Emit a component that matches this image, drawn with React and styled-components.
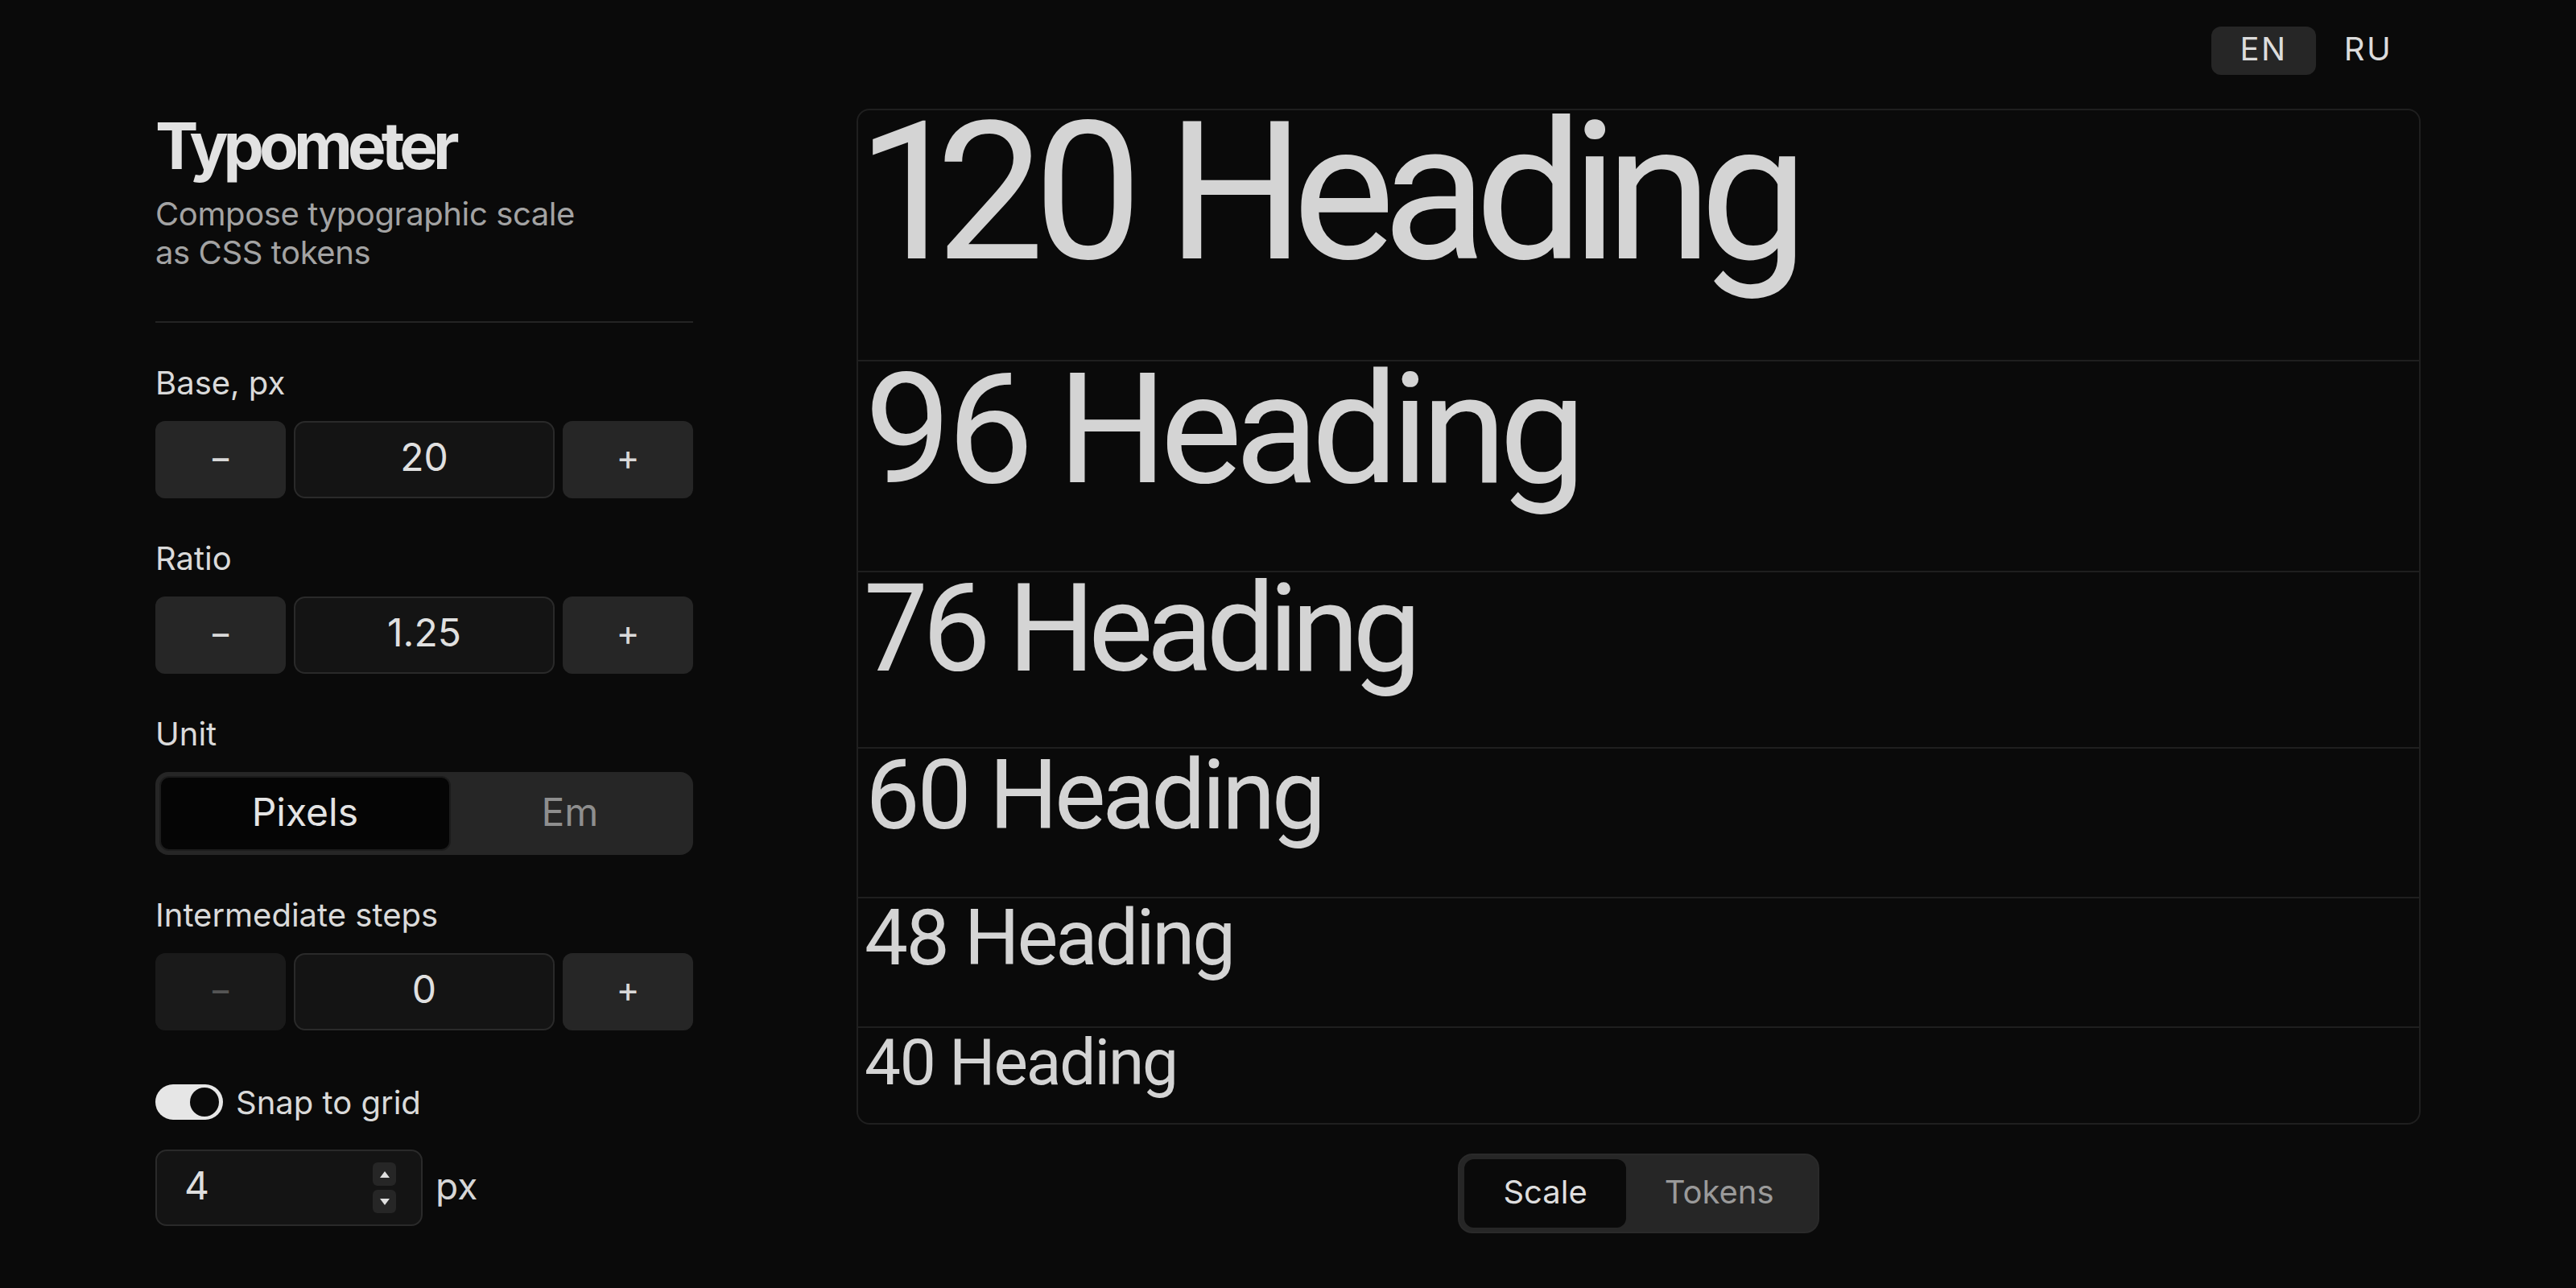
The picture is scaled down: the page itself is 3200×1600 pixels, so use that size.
import React from "react"
import styled, { createGlobalStyle } from "styled-components"

const GlobalStyle = createGlobalStyle`
  * {
    box-sizing: border-box;
  }
  html,
  body {
    margin: 0;
    background: #0a0a0a;
  }
  body {
    font-family: Inter, "Noto Sans", sans-serif;
    color: #d9d9d9;
  }
  button {
    font-family: inherit;
    cursor: pointer;
  }
`

const Page = styled.div`
  width: 2814px;
  min-height: 1600px;
  margin: 0 auto;
  padding-top: 33px;
`

const TopBar = styled.div`
  display: flex;
  justify-content: flex-end;
  height: 60px;
  margin-bottom: 42px;
`

const LangButton = styled.button`
  width: 130px;
  height: 60px;
  padding: 0 0 6px;
  border: none;
  border-radius: 12px;
  background: ${(p) => (p.$active ? "#262626" : "transparent")};
  color: #dcdcdc;
  font-size: 40px;
  letter-spacing: 0.06em;
`

const Main = styled.div`
  display: grid;
  grid-template-columns: 668px 1fr;
  column-gap: 203px;
  align-items: start;
`

const Sidebar = styled.aside`
  display: flex;
  flex-direction: column;
`

const Title = styled.h1`
  margin: 0;
  font-size: 80px;
  line-height: 1.15;
  font-weight: 700;
  letter-spacing: -0.075em;
  color: #e2e2e2;
`

const Subtitle = styled.p`
  margin: 15px 0 0;
  font-size: 40px;
  line-height: 48px;
  letter-spacing: -0.01em;
  color: #a3a3a3;
`

const Divider = styled.hr`
  width: 100%;
  margin: 61px 0 51px;
  border: none;
  border-top: 2px solid #242424;
`

const Fields = styled.div`
  display: flex;
  flex-direction: column;
  gap: 51px;
`

const Field = styled.div`
  display: flex;
  flex-direction: column;
  gap: 23px;
`

const Label = styled.div`
  font-size: 40px;
  line-height: 48px;
  color: #dadada;
`

const Stepper = styled.div`
  display: grid;
  grid-template-columns: 1fr 2fr 1fr;
  gap: 10px;
  height: 96px;
`

const StepButton = styled.button`
  padding: 0 0 6px;
  border: none;
  border-radius: 12px;
  background: ${(p) => (p.disabled ? "#1a1a1a" : "#262626")};
  color: ${(p) => (p.disabled ? "#555555" : "#d9d9d9")};
  font-size: 44px;
  line-height: 1;
`

const StepValue = styled.div`
  display: flex;
  align-items: center;
  justify-content: center;
  padding-bottom: 8px;
  background: #141414;
  border: 2px solid #2a2a2a;
  border-radius: 14px;
  font-size: 48px;
  color: #e0e0e0;
`

const Segmented = styled.div`
  display: flex;
  height: 103px;
  padding: 5px;
  background: #262626;
  border-radius: 16px;
`

const Segment = styled.button`
  flex: 1 1 auto;
  padding: 0 0 4px;
  border: ${(p) => (p.$active ? "2px solid #1c1c1c" : "none")};
  border-radius: 12px;
  background: ${(p) => (p.$active ? "#050505" : "transparent")};
  color: ${(p) => (p.$active ? "#e4e4e4" : "#8e8e8e")};
  font-size: 48px;
`

const SnapField = styled.div`
  display: flex;
  flex-direction: column;
  gap: 34px;
  margin-top: 15px;
`

const SnapRow = styled.label`
  display: flex;
  align-items: center;
  gap: 16px;
  height: 48px;
  padding-bottom: 2px;
  font-size: 40px;
  color: #dadada;
`

const Toggle = styled.span`
  display: flex;
  align-items: center;
  justify-content: flex-end;
  width: 84px;
  height: 44px;
  padding: 4px 5px;
  border-radius: 22px;
  background: #e6e6e6;
`

const Knob = styled.span`
  width: 36px;
  height: 36px;
  border-radius: 50%;
  background: #0a0a0a;
`

const GridRow = styled.div`
  display: flex;
  align-items: center;
  gap: 16px;
`

const NumberBox = styled.div`
  display: flex;
  align-items: center;
  justify-content: space-between;
  width: 332px;
  height: 95px;
  padding: 0 31px 0 34px;
  background: #141414;
  border: 2px solid #2a2a2a;
  border-radius: 14px;
  font-size: 48px;
  color: #dedede;
`

const NumberText = styled.span`
  padding-bottom: 6px;
`

const Spinner = styled.div`
  display: flex;
  flex-direction: column;
  gap: 5px;
`

const SpinButton = styled.span`
  display: flex;
  align-items: center;
  justify-content: center;
  width: 29px;
  height: 29px;
  border-radius: 6px;
  background: #262626;

  &::after {
    content: "";
    border-left: 6px solid transparent;
    border-right: 6px solid transparent;
    ${(p) =>
      p.$down
        ? "border-top: 8px solid #e0e0e0;"
        : "border-bottom: 8px solid #e0e0e0;"}
  }
`

const Unit = styled.span`
  padding-bottom: 6px;
  font-size: 46px;
  color: #d6d6d6;
`

const Preview = styled.section`
  display: flex;
  flex-direction: column;
  align-items: center;
  gap: 36px;
`

const ScaleList = styled.div`
  align-self: stretch;
  height: 1262px;
  border: 2px solid #1f1f1f;
  border-radius: 16px;
`

const HeadingRow = styled.div`
  font-family: Roboto, "Noto Sans", sans-serif;
  font-size: ${(p) => p.$size}px;
  font-variant-numeric: proportional-nums;
  line-height: 0.74;
  letter-spacing: ${(p) => p.$tracking}em;
  padding: 14px 8px calc(0.31em + 44px);
  border-bottom: 2px solid #1f1f1f;
  color: #d4d4d4;
  white-space: nowrap;

  &:last-child {
    border-bottom: none;
  }
`

const ViewSwitch = styled.div`
  display: inline-flex;
  height: 99px;
  padding: 5px 6px;
  background: #262626;
  border: 2px solid #2a2a2a;
  border-radius: 18px;
`

const ViewTab = styled.button`
  padding: 0 48px 4px;
  border: none;
  border-radius: 12px;
  background: ${(p) => (p.$active ? "#0a0a0a" : "transparent")};
  color: ${(p) => (p.$active ? "#dedede" : "#9a9a9a")};
  font-size: 40px;
`

const scale = [
  { size: 120, tracking: -0.065 },
  { size: 96, tracking: -0.048 },
  { size: 76, tracking: -0.055 },
  { size: 60, tracking: -0.037 },
  { size: 48, tracking: -0.033 },
  { size: 40, tracking: -0.025 },
]

function NumberStepper({ value, minDisabled }) {
  return (
    <Stepper>
      <StepButton disabled={minDisabled}>−</StepButton>
      <StepValue>{value}</StepValue>
      <StepButton>+</StepButton>
    </Stepper>
  )
}

export default function App() {
  return (
    <>
      <GlobalStyle />
      <Page>
        <TopBar>
          <LangButton $active>EN</LangButton>
          <LangButton>RU</LangButton>
        </TopBar>
        <Main>
          <Sidebar>
            <Title>Typometer</Title>
            <Subtitle>
              Compose typographic scale
              <br />
              as CSS tokens
            </Subtitle>
            <Divider />
            <Fields>
              <Field>
                <Label>Base, px</Label>
                <NumberStepper value="20" />
              </Field>
              <Field>
                <Label>Ratio</Label>
                <NumberStepper value="1.25" />
              </Field>
              <Field>
                <Label>Unit</Label>
                <Segmented>
                  <Segment $active>Pixels</Segment>
                  <Segment>Em</Segment>
                </Segmented>
              </Field>
              <Field>
                <Label>Intermediate steps</Label>
                <NumberStepper value="0" minDisabled />
              </Field>
              <SnapField>
                <SnapRow>
                  <Toggle>
                    <Knob />
                  </Toggle>
                  Snap to grid
                </SnapRow>
                <GridRow>
                  <NumberBox>
                    <NumberText>4</NumberText>
                    <Spinner>
                      <SpinButton />
                      <SpinButton $down />
                    </Spinner>
                  </NumberBox>
                  <Unit>px</Unit>
                </GridRow>
              </SnapField>
            </Fields>
          </Sidebar>
          <Preview>
            <ScaleList>
              {scale.map(({ size, tracking }) => (
                <HeadingRow key={size} $size={size * 2} $tracking={tracking}>
                  {`${size} Heading`}
                </HeadingRow>
              ))}
            </ScaleList>
            <ViewSwitch>
              <ViewTab $active>Scale</ViewTab>
              <ViewTab>Tokens</ViewTab>
            </ViewSwitch>
          </Preview>
        </Main>
      </Page>
    </>
  )
}
